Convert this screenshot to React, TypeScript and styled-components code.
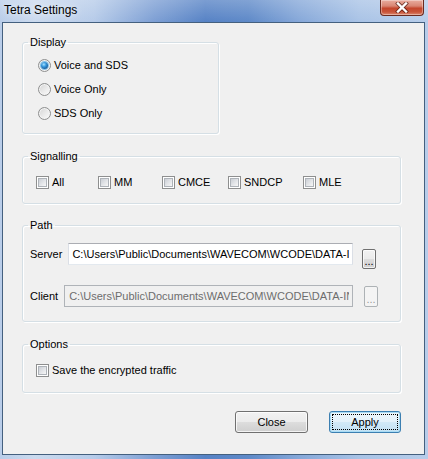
import React from 'react'
import styled, { createGlobalStyle } from 'styled-components'

const GlobalStyle = createGlobalStyle`
    html, body {
        margin: 0;
        padding: 0;
    }
    body {
        font-family: "Liberation Sans", Arial, sans-serif;
        font-size: 11px;
        color: #000;
    }
`

const PATH = 'C:\\Users\\Public\\Documents\\WAVECOM\\WCODE\\DATA-IN\\'

const signals = [
    { name: 'All', width: 62 },
    { name: 'MM', width: 64 },
    { name: 'CMCE', width: 66 },
    { name: 'SNDCP', width: 75 },
    { name: 'MLE', width: 0 },
]

export default function App() {
    return (
        <>
            <GlobalStyle />
            <Window>
                <TitleBar>
                    <Title>Tetra Settings</Title>
                    <CloseBox>
                        <svg width="16" height="11" viewBox="0 0 16 11">
                            <path d="M4 1.5 L12 9.5 M12 1.5 L4 9.5" stroke="#4a130b" strokeWidth="4" strokeLinecap="square" opacity="0.7" />
                            <path d="M4 1.5 L12 9.5 M12 1.5 L4 9.5" stroke="#fff" strokeWidth="2.4" strokeLinecap="square" />
                        </svg>
                    </CloseBox>
                </TitleBar>
                <Client>
                    <Group $width={197}>
                        <Legend>Display</Legend>
                        <GroupBody $pad="10px 0 13px 15px" $gap={11}>
                            <Choice>
                                <RadioCircle><RadioDot /></RadioCircle>
                                Voice and SDS
                            </Choice>
                            <Choice>
                                <RadioCircle />
                                Voice Only
                            </Choice>
                            <Choice>
                                <RadioCircle />
                                SDS Only
                            </Choice>
                        </GroupBody>
                    </Group>

                    <Group $mt={16}>
                        <Legend>Signalling</Legend>
                        <GroupBody $pad="13px 0 14px 13px" $row>
                            {signals.map(s => (
                                <Choice key={s.name} $width={s.width}>
                                    <CheckBox><CheckFill /></CheckBox>
                                    {s.name}
                                </Choice>
                            ))}
                        </GroupBody>
                    </Group>

                    <Group $mt={15}>
                        <Legend>Path</Legend>
                        <GroupBody $pad="11px 0 14px 7px" $gap={20}>
                            <PathRow $right={24}>
                                <PathLabel>Server</PathLabel>
                                <TextBox readOnly defaultValue={PATH} />
                                <BrowseButton $gap={9} $top={6} $h={20}>...</BrowseButton>
                            </PathRow>
                            <PathRow $right={22}>
                                <PathLabel>Client</PathLabel>
                                <TextBox disabled defaultValue={PATH} />
                                <BrowseButton disabled $gap={11} $top={1} $h={21}>...</BrowseButton>
                            </PathRow>
                        </GroupBody>
                    </Group>

                    <Group $mt={16}>
                        <Legend>Options</Legend>
                        <GroupBody $pad="13px 0 15px 13px">
                            <Choice>
                                <CheckBox><CheckFill /></CheckBox>
                                Save the encrypted traffic
                            </Choice>
                        </GroupBody>
                    </Group>

                    <ButtonRow>
                        <DialogButton $w={73}>Close</DialogButton>
                        <DialogButton $w={72} $default>Apply</DialogButton>
                    </ButtonRow>
                </Client>
            </Window>
        </>
    )
}

const Window = styled.div`
    width: 428px;
    height: 459px;
    box-sizing: border-box;
    padding: 0 3px 4px 2px;
    display: flex;
    flex-direction: column;
    background:
        linear-gradient(rgba(255, 255, 255, 0.22), rgba(255, 255, 255, 0) 22px),
        linear-gradient(90deg, #b9cde9 0%, #cbdaee 8%, #b6cbe9 22%, #7d9fd4 36%, #5682c5 48%, #5e89c8 58%, #86a8d9 70%, #a9c3e6 84%, #b7cdea 100%);
`

const TitleBar = styled.div`
    height: 22px;
    display: flex;
    justify-content: space-between;
    align-items: flex-start;
    padding-left: 2px;
`

const Title = styled.div`
    font-family: "Liberation Sans", Arial, sans-serif;
    font-size: 12px;
    line-height: 20px;
    color: #000;
    text-shadow: 0 0 6px rgba(255, 255, 255, 0.9);
`

const CloseBox = styled.div`
    width: 44px;
    height: 16px;
    box-sizing: border-box;
    margin-right: 1px;
    border: 1px solid #6b2a1f;
    border-top: none;
    border-radius: 0 0 4px 4px;
    display: flex;
    align-items: center;
    justify-content: center;
    background: linear-gradient(#e9ad9f 0%, #d98673 40%, #c4462c 55%, #c9553a 80%, #dc8a72 100%);
    box-shadow: inset 0 0 0 1px rgba(255, 255, 255, 0.35);
`

const Client = styled.div`
    flex: 1;
    background: #f0f0f0;
    border: 1px solid #44607f;
    padding: 13px 23px 0 19px;
    display: flex;
    flex-direction: column;
`

const Group = styled.fieldset<{ $width?: number; $mt?: number }>`
    margin: ${p => p.$mt || 0}px 0 0 0;
    padding: 0;
    min-width: 0;
    box-sizing: border-box;
    align-self: ${p => (p.$width ? 'flex-start' : 'stretch')};
    width: ${p => (p.$width ? `${p.$width}px` : 'auto')};
    border: 1px solid #d5dfe5;
    border-radius: 3px;
    box-shadow: 1px 1px 0 #ffffff, inset 1px 1px 0 #ffffff;
`

const Legend = styled.legend`
    margin-left: 5px;
    padding: 0 2px;
    line-height: 13px;
    font-size: 11px;
`

const GroupBody = styled.div<{ $pad: string; $gap?: number; $row?: boolean }>`
    display: flex;
    flex-direction: ${p => (p.$row ? 'row' : 'column')};
    gap: ${p => p.$gap || 0}px;
    padding: ${p => p.$pad};
`

const Choice = styled.label<{ $width?: number }>`
    display: flex;
    align-items: center;
    gap: 3px;
    height: 13px;
    line-height: 13px;
    width: ${p => (p.$width ? `${p.$width}px` : 'auto')};
    flex: none;
`

const RadioCircle = styled.span`
    width: 13px;
    height: 13px;
    box-sizing: border-box;
    border-radius: 50%;
    border: 1px solid #8e8f8f;
    background: linear-gradient(135deg, #d4d4d4 0%, #ebebeb 55%, #fbfbfb 100%);
    box-shadow: inset 0 0 0 1px #f4f4f4;
    display: flex;
    align-items: center;
    justify-content: center;
`

const RadioDot = styled.span`
    width: 7px;
    height: 7px;
    border-radius: 50%;
    background: radial-gradient(circle at 40% 35%, #a6e4ff 0%, #3a9be0 35%, #135c9d 75%, #0c3f70 100%);
    box-shadow: 0 0 0 1px #86c3e8;
`

const CheckBox = styled.span`
    width: 13px;
    height: 13px;
    box-sizing: border-box;
    border: 1px solid #8e8f8f;
    background: #ffffff;
    padding: 1px;
    flex: none;
`

const CheckFill = styled.span`
    display: block;
    width: 9px;
    height: 9px;
    box-sizing: border-box;
    border: 1px solid #aeb3b9;
    background: linear-gradient(135deg, #cbcfd5 0%, #e4e6e9 55%, #f7f7f7 100%);
`

const PathRow = styled.div<{ $right: number }>`
    display: flex;
    align-items: flex-start;
    height: 22px;
    padding-right: ${p => p.$right}px;
`

const PathLabel = styled.span`
    line-height: 22px;
    margin-right: 6px;
    flex: none;
`

const TextBox = styled.input`
    flex: 1;
    min-width: 0;
    height: 22px;
    box-sizing: border-box;
    margin: 0;
    padding: 0 3px;
    font-family: "Liberation Sans", Arial, sans-serif;
    font-size: 11px;
    color: #000;
    background: #ffffff;
    border: 1px solid #dbdfe6;
    border-top-color: #abadb3;
    border-bottom-color: #e3e9ef;
    outline: none;

    &:disabled {
        color: #6d6d6d;
        background: #f0f0f0;
        border-color: #afb3b8;
        padding-left: 4px;
    }
`

const BrowseButton = styled.button<{ $gap: number; $top: number; $h: number }>`
    width: 14px;
    height: ${p => p.$h}px;
    margin: ${p => p.$top}px 0 0 ${p => p.$gap}px;
    padding: 4px 0 0 0;
    box-sizing: border-box;
    flex: none;
    font-family: "Liberation Sans", Arial, sans-serif;
    font-size: 11px;
    line-height: 10px;
    color: #000;
    border: 1px solid #707070;
    border-radius: 2px;
    background: linear-gradient(#f2f2f2 0%, #ebebeb 50%, #dddddd 50%, #cfcfcf 100%);
    box-shadow: inset 0 0 0 1px rgba(255, 255, 255, 0.7);

    &:disabled {
        color: #9a9a9a;
        border-color: #adb2b5;
        background: #f4f4f4;
        box-shadow: none;
    }
`

const ButtonRow = styled.div`
    display: flex;
    justify-content: flex-end;
    gap: 21px;
    margin-top: 18px;
`

const DialogButton = styled.button<{ $w: number; $default?: boolean }>`
    width: ${p => p.$w}px;
    height: 22px;
    box-sizing: border-box;
    padding: 0;
    font-family: "Liberation Sans", Arial, sans-serif;
    font-size: 11px;
    color: #000;
    border: 1px solid ${p => (p.$default ? '#3c7fb1' : '#707070')};
    border-radius: 3px;
    background: ${p =>
        p.$default
            ? 'linear-gradient(#eef7fc 0%, #e3f1fa 50%, #d2e9f7 50%, #c4e1f3 100%)'
            : 'linear-gradient(#f2f2f2 0%, #ebebeb 50%, #dddddd 50%, #cfcfcf 100%)'};
    box-shadow: inset 0 0 0 1px ${p => (p.$default ? '#a9dcf5' : 'rgba(255, 255, 255, 0.75)')};
    outline: ${p => (p.$default ? '1px dotted #000' : 'none')};
    outline-offset: -4px;
`
